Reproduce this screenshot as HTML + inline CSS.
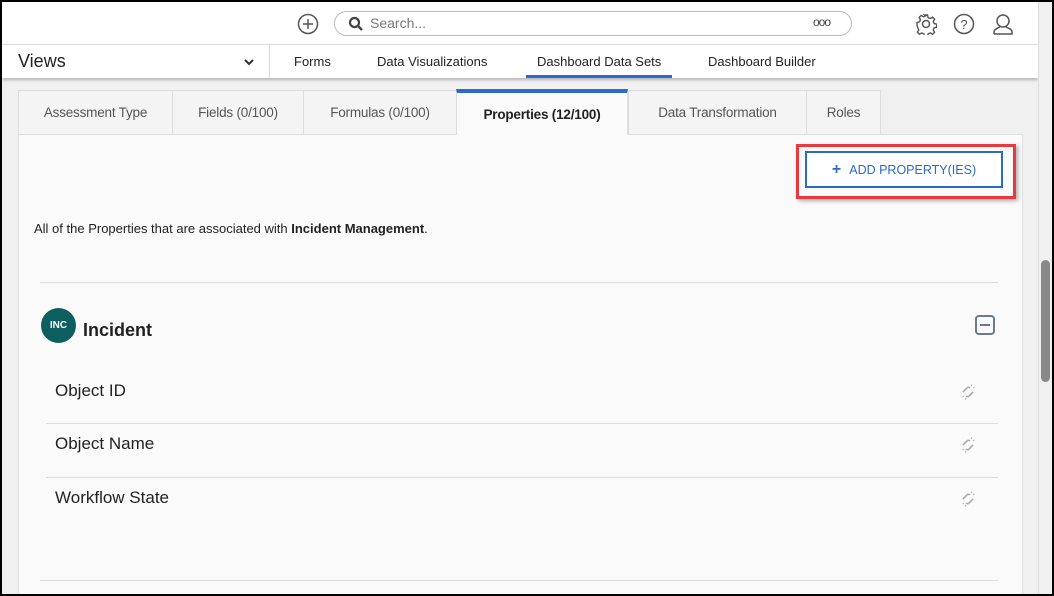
<!DOCTYPE html>
<html><head><style>
*{box-sizing:border-box;margin:0;padding:0}
body{width:1054px;height:596px;overflow:hidden;background:#000;font-family:"Liberation Sans",sans-serif;position:relative}
.frame{position:absolute;left:2px;top:2px;width:1050px;height:592px;background:#f0f0f0;overflow:hidden}
.top{position:absolute;left:0;top:0;width:1036px;height:43px;background:#fff;border-bottom:1px solid #ddd}
.nav{position:absolute;left:0;top:43px;width:1036px;height:33px;background:#fff;box-shadow:0 2px 3px rgba(0,0,0,.25)}
.abs{position:absolute}
.tab{position:absolute;top:88px;height:45px;background:#f4f4f4;border:1px solid #ddd;font-size:13.5px;color:#555;display:flex;align-items:center;justify-content:center;white-space:nowrap;letter-spacing:-0.2px}
.panel{position:absolute;left:16px;top:132px;width:1005px;height:470px;background:#fafafa;border:1px solid #e0e0e0}
.row{position:absolute;left:38px;width:958px;height:1px;background:#ddd}
.item{position:absolute;left:53px;font-size:17px;color:#222}
.link{position:absolute;left:958px}
.sb{position:absolute;left:1036px;top:0;width:14px;height:592px;background:#f0f0f0;border-left:1px solid #ddd}
</style></head><body><div class="frame">
<div class="top">
 <svg class="abs" style="left:295px;top:11px" width="22" height="22"><circle cx="11" cy="11" r="9.5" fill="none" stroke="#555" stroke-width="1.5"/><path d="M11 6v10M6 11h10" stroke="#555" stroke-width="1.5"/></svg>
 <div class="abs" style="left:332px;top:9px;width:518px;height:25px;border:1px solid #bbb;border-radius:13px"></div>
 <svg class="abs" style="left:346px;top:14px" width="16" height="16"><circle cx="6.5" cy="6.5" r="4.5" fill="none" stroke="#444" stroke-width="2.2"/><path d="M10 10l4 4" stroke="#444" stroke-width="2.5"/></svg>
 <div class="abs" style="left:368px;top:13px;font-size:14px;color:#777">Search...</div>
 <div class="abs" style="left:811px;top:13px;font-size:12px;color:#444;letter-spacing:-1px">ooo</div>
 <svg class="abs" style="left:913px;top:11px" width="22" height="22"><circle cx="11" cy="11" r="3.5" fill="none" stroke="#555" stroke-width="1.5"/><path d="M9.5 2h3l.6 2.5 2.2 1 2.2-1.4 2.1 2.1-1.4 2.2 1 2.2 2.5.6v3l-2.5.6-1 2.2 1.4 2.2-2.1 2.1-2.2-1.4-2.2 1-.6 2.5h-3l-.6-2.5-2.2-1-2.2 1.4-2.1-2.1 1.4-2.2-1-2.2L2 12.5v-3l2.5-.6 1-2.2-1.4-2.2 2.1-2.1 2.2 1.4 2.2-1z" fill="none" stroke="#555" stroke-width="1.4"/></svg>
 <svg class="abs" style="left:951px;top:11px" width="22" height="22"><circle cx="11" cy="11" r="9.5" fill="none" stroke="#555" stroke-width="1.5"/><text x="11" y="16" font-size="13" text-anchor="middle" fill="#555" font-family="Liberation Sans">?</text></svg>
 <svg class="abs" style="left:989px;top:10px" width="24" height="24"><circle cx="12" cy="9" r="6" fill="none" stroke="#555" stroke-width="1.5"/><path d="M3 22h18v-2c0-3-4-4-6-5M3 22v-2c0-3 4-4 6-5" fill="none" stroke="#555" stroke-width="1.5"/></svg>
</div>
<div class="nav">
 <div class="abs" style="left:16px;top:6px;font-size:18px;color:#222">Views</div>
 <svg class="abs" style="left:242px;top:13px" width="10" height="8"><path d="M1 2l4 4 4-4" fill="none" stroke="#333" stroke-width="2"/></svg>
 <div class="abs" style="left:267px;top:0;width:1px;height:33px;background:#ddd"></div>
 <div class="abs" style="left:292px;top:9px;font-size:13px;color:#222">Forms</div>
 <div class="abs" style="left:375px;top:9px;font-size:13px;color:#222">Data Visualizations</div>
 <div class="abs" style="left:535px;top:9px;font-size:13px;color:#222">Dashboard Data Sets</div>
 <div class="abs" style="left:524px;top:30px;width:146px;height:3px;background:#2a6acb"></div>
 <div class="abs" style="left:706px;top:9px;font-size:13px;color:#222">Dashboard Builder</div>
</div>
<div class="panel"></div>
<div class="tab" style="left:16px;width:155px">Assessment Type</div>
<div class="tab" style="left:170px;width:132px">Fields (0/100)</div>
<div class="tab" style="left:301px;width:154px">Formulas (0/100)</div>
<div class="tab" style="left:454px;width:172px;height:46px;background:#fafafa;border-bottom:none;border-top:4px solid #2a6acb;color:#222;font-weight:bold;top:87px">Properties (12/100)</div>
<div class="tab" style="left:626px;width:179px">Data Transformation</div>
<div class="tab" style="left:804px;width:75px">Roles</div>
<div class="abs" style="left:794px;top:142px;width:220px;height:55px;border:3px solid #e8393f;box-shadow:2px 2px 4px rgba(0,0,0,.3)"></div>
<div class="abs" style="left:803px;top:149px;width:198px;height:37px;border:2px solid #2a6acb;background:#fff;color:#2a6acb;font-size:12.5px;display:flex;align-items:center;justify-content:center"><b style="font-size:16px;margin-right:8px">+</b>ADD PROPERTY(IES)</div>
<div class="abs" style="left:32px;top:219px;font-size:13px;color:#222">All of the Properties that are associated with <b>Incident Management</b>.</div>
<div class="row" style="top:280px"></div>
<div class="abs" style="left:39px;top:306px;width:35px;height:35px;border-radius:50%;background:#0d5e5e;color:#fff;font-size:10px;font-weight:bold;display:flex;align-items:center;justify-content:center">INC</div>
<div class="abs" style="left:81px;top:318px;font-size:18px;font-weight:bold;color:#222">Incident</div>
<div class="abs" style="left:973px;top:313px;width:20px;height:20px;border:2px solid #6a7a90;border-radius:4px"><div style="margin:7px 3px;height:2px;background:#6a7a90"></div></div>
<svg width="0" height="0" style="position:absolute"><defs><g id="bl" fill="none" stroke="#aaa" stroke-width="1.6"><path d="M3 8l4-4a2 2 0 0 1 3 0M13 8l-4 4a2 2 0 0 1-3 0"/><path d="M11 2l1-1.5M13 4l1.5-1M4 12l-1.5 1M6 14l-1 1.5" stroke-width="1"/></g></defs></svg>
<div class="item" style="top:379px">Object ID</div><svg class="link" style="top:382px" width="17" height="17"><use href="#bl"/></svg>
<div class="row" style="top:421px;left:44px;width:952px"></div>
<div class="item" style="top:432px">Object Name</div><svg class="link" style="top:435px" width="17" height="17"><use href="#bl"/></svg>
<div class="row" style="top:475px;left:44px;width:952px"></div>
<div class="item" style="top:486px">Workflow State</div><svg class="link" style="top:489px" width="17" height="17"><use href="#bl"/></svg>
<div class="row" style="top:578px"></div>
<div class="sb"><div style="position:absolute;left:2px;top:258px;width:9px;height:122px;background:#888;border-radius:5px"></div></div>
</div></body></html>
